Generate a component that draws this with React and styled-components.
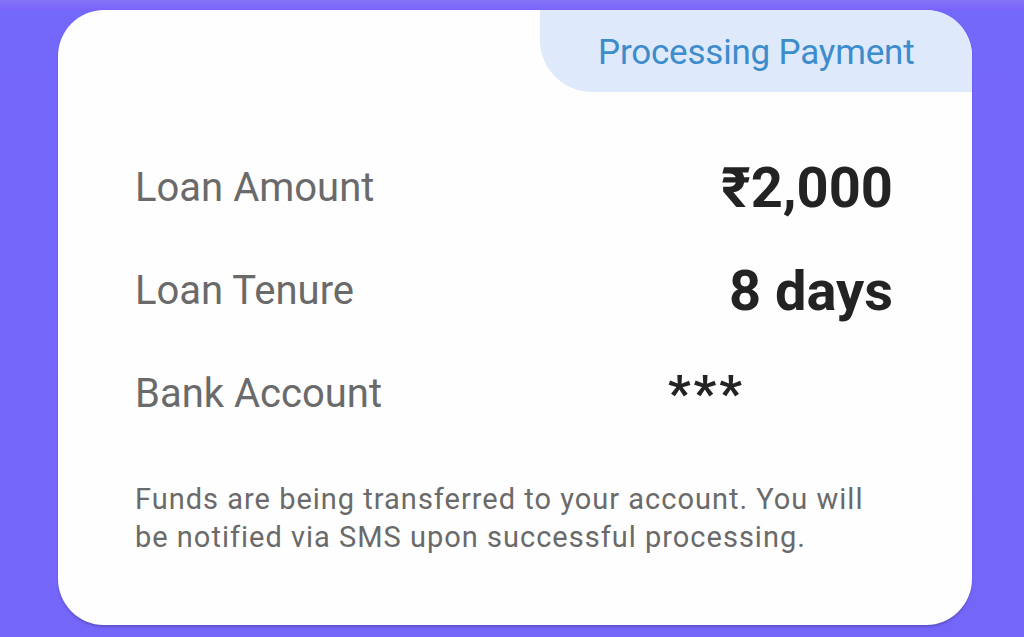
import styled, { createGlobalStyle } from 'styled-components';

const GlobalStyle = createGlobalStyle`
  html, body {
    margin: 0;
    padding: 0;
    background: #7566f9;
  }
  body {
    font-family: Roboto, "Noto Sans", "Liberation Sans", sans-serif;
  }
`;

const Page = styled.div`
  width: 1024px;
  height: 637px;
  box-sizing: border-box;
  padding: 10px 52px 12px 58px;
  background: linear-gradient(180deg, #8475f7 0px, #7a63fb 10px, #7468fa 11px, #7466f8 100%);
`;

const Card = styled.div`
  height: 100%;
  background: #fefefe;
  border-radius: 46px;
  overflow: hidden;
  box-shadow: 0 2px 2px rgba(60, 50, 120, 0.35);
  display: flex;
  flex-direction: column;
`;

const Header = styled.div`
  display: flex;
  justify-content: flex-end;
`;

const StatusBadge = styled.div`
  width: 432px;
  height: 82px;
  box-sizing: border-box;
  background: #deeafb;
  border-bottom-left-radius: 52px;
  display: flex;
  align-items: center;
  padding: 3px 0 0 58px;
  color: #3d8ccb;
  font-size: 35px;
  letter-spacing: -0.2px;
`;

const Details = styled.div`
  margin-top: 44px;
  padding: 0 79px 0 77px;
  display: flex;
  flex-direction: column;
`;

const Row = styled.div`
  height: 103px;
  display: flex;
  align-items: center;
  justify-content: space-between;
`;

const Label = styled.span`
  font-size: 40px;
  color: #6a6a6a;
`;

const Value = styled.span`
  font-size: ${p => (p.$masked ? '50px' : '56px')};
  font-weight: 700;
  color: #232323;
  letter-spacing: ${p => (p.$masked ? '3px' : '0')};
  margin-right: ${p => (p.$masked ? '148px' : '0')};
`;

const Note = styled.p`
  margin: 35px 0 0;
  padding: 0 79px 0 77px;
  font-size: 29px;
  line-height: 38px;
  letter-spacing: 1px;
  color: #6a6a6a;
`;

const rows = [
  { label: 'Loan Amount', value: '₹2,000' },
  { label: 'Loan Tenure', value: '8 days' },
  { label: 'Bank Account', value: '***', masked: true },
];

export default function App() {
  return (
    <>
      <GlobalStyle />
      <Page>
        <Card>
          <Header>
            <StatusBadge>Processing Payment</StatusBadge>
          </Header>
          <Details>
            {rows.map(r => (
              <Row key={r.label}>
                <Label>{r.label}</Label>
                <Value $masked={r.masked}>{r.value}</Value>
              </Row>
            ))}
          </Details>
          <Note>
            Funds are being transferred to your account. You will be notified via SMS upon successful processing.
          </Note>
        </Card>
      </Page>
    </>
  );
}
